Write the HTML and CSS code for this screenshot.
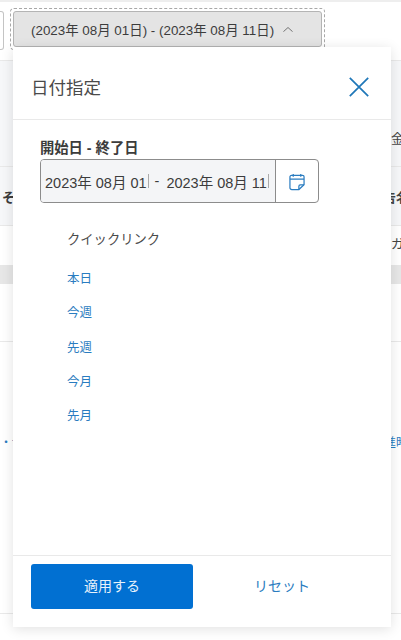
FILE: index.html
```html
<!DOCTYPE html>
<html lang="ja">
<head>
<meta charset="utf-8">
<title>日付指定</title>
<link rel="stylesheet" href="styles.css">
</head>
<body>
<div class="page">
  <div class="topstrip"></div>
  <div class="toolbar">
    <div class="stub"></div>
    <div class="focus-ring">
      <button class="range-btn">
        <span>(2023年 08月 01日) - (2023年 08月 11日)</span>
        <svg class="chev" width="10" height="5" viewBox="0 0 10 5"><path d="M.4 4.700 5 .5l4.600 4.200" fill="none" stroke="#666" stroke-width=".9"/></svg>
      </button>
    </div>
  </div>
  <div class="bg-row r1"><span class="right-text">金</span></div>
  <div class="bg-row r2"><span class="left-text bold">そ</span><span class="right-text bold">告名</span></div>
  <div class="bg-row r3"><span class="right-text">ガ</span></div>
  <div class="band"></div>
  <div class="bg-row r4"></div>
  <div class="bg-row r5"><span class="left-link">・ｻ</span><span class="right-link">進時</span></div>
</div>
<section class="popover">
  <header class="pop-head">
    <h2 class="pop-title">日付指定</h2>
    <svg class="close" width="20" height="20" viewBox="0 0 20 20"><path d="M.8.8l18.400 18.400M19.200.8.8 19.200" fill="none" stroke="#1f77b8" stroke-width="1.700"/></svg>
  </header>
  <div class="pop-body">
    <label class="field-label">開始日 - 終了日</label>
    <div class="date-field">
      <div class="date-values">
        <span>2023年 08月 01</span><i class="caret"></i><span class="dash">-</span><span>2023年 08月 11</span><i class="caret"></i>
      </div>
      <div class="cal-cell">
        <svg width="16" height="18" viewBox="0 0 17 19" fill="none" stroke="#2a7cc0" stroke-width="1.300"><path d="M4.500 1v3M12.500 1v3"/><path d="M10.500 17.500H3a2 2 0 0 1-2-2V4a1.500 1.500 0 0 1 1.500-1.500h12A1.500 1.500 0 0 1 16 4v8.500z"/><path d="M1 6.500h15"/><path d="M10.500 17.500v-3.500a1.500 1.500 0 0 1 1.500-1.500h4"/></svg>
      </div>
    </div>
    <div class="quick-title">クイックリンク</div>
    <ul class="quick-list">
      <li>本日</li>
      <li>今週</li>
      <li>先週</li>
      <li>今月</li>
      <li>先月</li>
    </ul>
  </div>
  <footer class="pop-foot">
    <button class="apply">適用する</button>
    <button class="reset">リセット</button>
  </footer>
</section>
</body>
</html>
```
FILE: styles.css
```css
* { box-sizing: border-box; }
html, body { margin: 0; height: 640px; overflow: hidden; }
body { background: #fff; font-family: "Liberation Sans", "Noto Sans CJK JP", sans-serif; color: #3c3c3c; position: relative; }
.page { height: 640px; display: flex; flex-direction: column; }
.topstrip { height: 2px; background: #eeeeee; }
.toolbar { height: 59px; display: flex; align-items: flex-start; padding-top: 6px; border-bottom: 1px solid #e9e9e9; gap: 6px; flex: none; }
.stub { width: 4px; height: 39px; margin-top: 3px; border: 1px solid #c4c4c4; border-left: 0; border-radius: 0 3px 3px 0; }
.focus-ring { padding: 2px; border: 1px dashed #a8a8a8; border-radius: 4px; }
.range-btn { width: 309px; height: 36px; display: flex; align-items: center; gap: 9px; padding: 0 0 0 17px; background: #e4e4e4; border: 1px solid #b4b4b4; border-radius: 3px; font: 13.400px "Liberation Sans", "Noto Sans CJK JP", sans-serif; color: #3c3c3c; }
.bg-row { position: relative; border-bottom: 1px solid #e9e9e9; flex: none; font-size: 13px; }
.r1 { height: 106px; background: #f6f7f9; }
.r2 { height: 59px; background: #f6f7f9; }
.r3 { height: 39px; border-bottom: 0; }
.band { height: 19px; background: #e7e7e7; flex: none; }
.r4 { height: 58px; }
.r5 { height: 272px; }
.right-text, .right-link, .left-text, .left-link { position: absolute; white-space: nowrap; }
.right-text { left: 391px; color: #444; }
.r1 .right-text { top: 67px; }
.r2 .right-text { top: 20px; left: 383px; }
.r3 .right-text { top: 7px; }
.left-text { left: 2px; top: 20px; }
.bold { font-weight: 700; }
.left-link { left: 0; top: 91px; color: #2a7cc0; font-size: 12px; }
.right-link { left: 384px; top: 91px; color: #2a7cc0; font-size: 12px; }
.popover { position: absolute; left: 13px; top: 47px; width: 378px; height: 580px; background: #fff; display: flex; flex-direction: column; box-shadow: 0 2px 12px rgba(0, 0, 0, .12); }
.pop-head { height: 73px; flex: none; display: flex; align-items: center; justify-content: space-between; padding: 8px 22px 0 18px; border-bottom: 1px solid #e9e9e9; }
.pop-title { margin: 0 0 2px; font-size: 17.500px; font-weight: 400; color: #4a4a4a; }
.pop-body { flex: 1; padding: 20px 0 0 27px; }
.field-label { display: block; font-size: 14.300px; font-weight: 700; line-height: 17px; color: #3c3c3c; }
.date-field { margin-top: 2px; width: 279px; height: 44px; display: flex; border: 1px solid #8c8c8c; border-radius: 4px; background: #fff; overflow: hidden; }
.date-values { flex: 1; display: flex; align-items: center; padding-left: 4px; background: #f4f5f7; border-right: 1px solid #8c8c8c; font-size: 14.500px; color: #3c3c3c; white-space: nowrap; }
.caret { width: 1px; height: 14px; margin-left: 1px; background: #aaa; }
.dash { margin: 0 7px 0 6px; }
.cal-cell { width: 42px; flex: none; display: flex; align-items: center; justify-content: center; padding-top: 1px; }
.quick-title { margin: 28px 0 0 27px; font-size: 13.300px; line-height: 18px; color: #4a4a4a; }
.quick-list { list-style: none; margin: 13px 0 0 27px; padding: 0; color: #2a7cc0; font-size: 12.500px; }
.quick-list li { height: 34.300px; line-height: 34px; }
.pop-foot { height: 72px; flex: none; display: flex; padding: 8px 0 0 18px; align-items: flex-start; border-top: 1px solid #e9e9e9; }
.apply { width: 162px; height: 45px; padding: 0 0 3px; background: #0170d2; color: #e8f2fb; border: 0; border-radius: 3px; font: 14px "Liberation Sans", "Noto Sans CJK JP", sans-serif; }
.reset { width: 178px; height: 45px; padding: 0 0 3px; background: none; border: 0; color: #2a7cc0; font: 14px "Liberation Sans", "Noto Sans CJK JP", sans-serif; }
```
